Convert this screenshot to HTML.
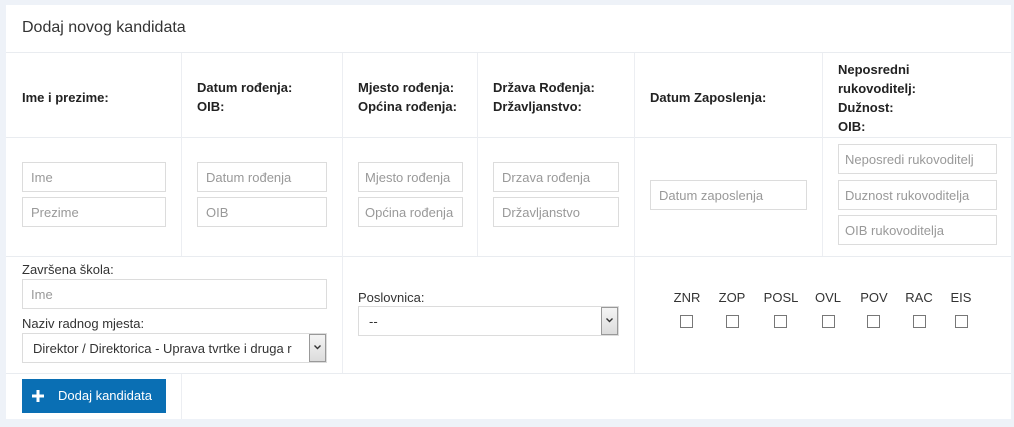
<!DOCTYPE html>
<html><head><meta charset="utf-8"><style>
*{box-sizing:border-box;margin:0;padding:0}
body{width:1014px;height:427px;background:#eef2f8;font-family:"Liberation Sans",sans-serif;color:#333;position:relative;overflow:hidden}
.p{position:absolute;left:6px;top:5px;width:1005px;height:414px;background:#fff}
.a{position:absolute}
.hl{position:absolute;height:1px;background:#e9ecf0}
.vl{position:absolute;width:1px;background:#eceef2}
.in{position:absolute;border:1px solid #dcdcdc;height:30px;font-size:13px;color:#999;padding:7px 0 0 8px;white-space:nowrap;overflow:hidden;background:#fff}
.h{position:absolute;font-size:13px;font-weight:bold;color:#222;line-height:19px}
.l{position:absolute;font-size:13px;color:#333}
.cb{position:absolute;top:315px;width:13px;height:13px;border:1px solid #777;background:#fff}
.ck{position:absolute;top:290px;font-size:13px;color:#333;transform:translateX(-50%)}
.arr{position:absolute;width:17px;border:1px solid #999;background:linear-gradient(#f4f4f4,#dcdcdc)}
.arr svg{position:absolute;left:4px;top:10px}
</style></head><body>
<div class="p"></div>
<div class="a" style="left:22px;top:19px;font-size:16px;color:#333">Dodaj novog kandidata</div>
<div class="hl" style="left:6px;top:52px;width:1005px"></div>
<div class="hl" style="left:6px;top:137px;width:1005px"></div>
<div class="hl" style="left:6px;top:256px;width:1005px"></div>
<div class="hl" style="left:6px;top:373px;width:1005px"></div>
<div class="vl" style="left:181px;top:53px;height:203px"></div>
<div class="vl" style="left:342px;top:53px;height:320px"></div>
<div class="vl" style="left:477px;top:53px;height:203px"></div>
<div class="vl" style="left:634px;top:53px;height:320px"></div>
<div class="vl" style="left:822px;top:53px;height:203px"></div>
<div class="vl" style="left:181px;top:374px;height:45px"></div>

<div class="h" style="left:22px;top:88px">Ime i prezime:</div>
<div class="h" style="left:197px;top:78px">Datum rođenja:<br>OIB:</div>
<div class="h" style="left:358px;top:78px">Mjesto rođenja:<br>Općina rođenja:</div>
<div class="h" style="left:493px;top:78px">Država Rođenja:<br>Državljanstvo:</div>
<div class="h" style="left:650px;top:88px">Datum Zaposlenja:</div>
<div class="h" style="left:838px;top:60px">Neposredni<br>rukovoditelj:<br>Dužnost:<br>OIB:</div>

<div class="in" style="left:22px;top:162px;width:144px">Ime</div>
<div class="in" style="left:22px;top:197px;width:144px">Prezime</div>
<div class="in" style="left:197px;top:162px;width:130px">Datum rođenja</div>
<div class="in" style="left:197px;top:197px;width:130px">OIB</div>
<div class="in" style="left:358px;top:162px;width:105px;padding-left:6px">Mjesto rođenja</div>
<div class="in" style="left:358px;top:197px;width:105px;padding-left:6px">Općina rođenja</div>
<div class="in" style="left:493px;top:162px;width:126px">Drzava rođenja</div>
<div class="in" style="left:493px;top:197px;width:126px">Državljanstvo</div>
<div class="in" style="left:650px;top:180px;width:157px">Datum zaposlenja</div>
<div class="in" style="left:838px;top:144px;width:159px;padding-left:6px">Neposredi rukovoditelj</div>
<div class="in" style="left:838px;top:180px;width:159px;padding-left:6px">Duznost rukovoditelja</div>
<div class="in" style="left:838px;top:215px;width:159px;padding-left:6px">OIB rukovoditelja</div>

<div class="l" style="left:22px;top:262px">Završena škola:</div>
<div class="in" style="left:22px;top:279px;width:305px">Ime</div>
<div class="l" style="left:22px;top:316px">Naziv radnog mjesta:</div>
<div class="in" style="left:22px;top:333px;width:305px;color:#333;padding-left:10px">Direktor / Direktorica - Uprava tvrtke i druga r</div>
<div class="arr" style="left:309px;top:334px;height:28px"><svg width="7" height="5" viewBox="0 0 7 5"><path d="M0.5 0.5L3.5 3.5L6.5 0.5" stroke="#333" stroke-width="1.4" fill="none"/></svg></div>
<div class="l" style="left:358px;top:290px">Poslovnica:</div>
<div class="in" style="left:358px;top:306px;width:261px;color:#333;padding-left:10px">--</div>
<div class="arr" style="left:601px;top:307px;height:28px"><svg width="7" height="5" viewBox="0 0 7 5"><path d="M0.5 0.5L3.5 3.5L6.5 0.5" stroke="#333" stroke-width="1.4" fill="none"/></svg></div>

<div class="ck" style="left:687px">ZNR</div><div class="cb" style="left:680px"></div>
<div class="ck" style="left:732px">ZOP</div><div class="cb" style="left:726px"></div>
<div class="ck" style="left:781px">POSL</div><div class="cb" style="left:774px"></div>
<div class="ck" style="left:828px">OVL</div><div class="cb" style="left:822px"></div>
<div class="ck" style="left:874px">POV</div><div class="cb" style="left:867px"></div>
<div class="ck" style="left:919px">RAC</div><div class="cb" style="left:913px"></div>
<div class="ck" style="left:961px">EIS</div><div class="cb" style="left:955px"></div>

<div class="a" style="left:22px;top:379px;width:144px;height:34px;background:#0a6fb4;color:#fff;font-size:13px;line-height:34px">
<svg class="a" style="left:10px;top:11px" width="12" height="12" viewBox="0 0 12 12"><path d="M4.5 0h3v4.5H12v3H7.5V12h-3V7.5H0v-3h4.5z" fill="#fff"/></svg>
<span class="a" style="left:36px;top:0">Dodaj kandidata</span></div>
</body></html>
